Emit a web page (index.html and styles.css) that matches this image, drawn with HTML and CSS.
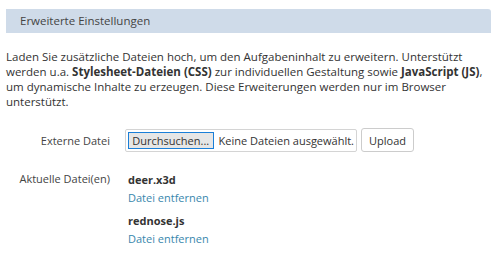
FILE: index.html
```html
<!DOCTYPE HTML>
<html>

<head>
    <meta charset="utf-8">
    <link rel="stylesheet" href="styles.css">
</head>

<body>
    <div class="panel">
        <div class="panel-head">Erweiterte Einstellungen</div>

        <p class="intro">Laden Sie zusätzliche Dateien hoch, um den Aufgabeninhalt zu erweitern. Unterstützt
            werden u.a. <strong>Stylesheet-Dateien (CSS)</strong> zur individuellen Gestaltung sowie <strong>JavaScript (JS)</strong>,
            um dynamische Inhalte zu erzeugen. Diese Erweiterungen werden nur im Browser unterstützt.</p>

        <div class="row upload-row">
            <div class="label">Externe Datei</div>
            <div class="field">
                <span class="file-input">
                    <span class="file-button">Durchsuchen...</span>
                    <span class="file-name">Keine Dateien ausgewählt.</span>
                </span>
                <button class="button">Upload</button>
            </div>
        </div>

        <div class="row files-row">
            <div class="label">Aktuelle Datei(en)</div>
            <div class="field files">
                <div class="file">
                    <strong>deer.x3d</strong>
                    <a href="#">Datei entfernen</a>
                </div>
                <div class="file">
                    <strong>rednose.js</strong>
                    <a href="#">Datei entfernen</a>
                </div>
            </div>
        </div>
    </div>
</body>

</html>
```

FILE: styles.css
```css
body {
    margin: 0;
    padding: 9px 9px 0 6px;
    font-family: "Open Sans", "Liberation Sans", sans-serif;
    font-size: 11.5px;
    color: #333;
    background: #fff;
}

.panel-head {
    height: 24px;
    line-height: 24px;
    padding-left: 14px;
    background-color: #cfdbe9;
    border-radius: 0 3px 0 0;
    color: #444;
    font-size: 11.5px;
}

.intro {
    margin: 16px 0 0;
    line-height: 15px;
}

.intro strong {
    font-weight: bold;
}

.row {
    display: flex;
    font-size: 11px;
}

.label {
    width: 104px;
    text-align: right;
    color: #444;
    flex-shrink: 0;
}

.field {
    margin-left: 15px;
    display: flex;
    align-items: center;
    gap: 4px;
}

.upload-row {
    margin-top: 19px;
    align-items: center;
}

.file-input {
    display: flex;
    align-items: center;
    width: 232px;
    height: 23px;
    padding: 0 2px;
    border: 1px solid #d4d4d4;
    border-radius: 2px;
    box-sizing: border-box;
    gap: 5px;
    color: #333;
    white-space: nowrap;
}

.file-button {
    width: 93px;
    height: 17px;
    line-height: 15px;
    text-align: center;
    border: 1px solid #1a7fd8;
    background: #e6e6e6;
    box-sizing: border-box;
}

.button {
    height: 24px;
    padding: 0 7px;
    border: 1px solid #ccc;
    border-radius: 3px;
    background: #fff;
    font-family: inherit;
    font-size: 11px;
    color: #333;
}

.files-row {
    margin-top: 19px;
}

.files {
    flex-direction: column;
    align-items: flex-start;
    gap: 0;
    margin-left: 18px;
}

.file {
    display: flex;
    flex-direction: column;
    line-height: 18px;
    margin-bottom: 5px;
}

.file strong {
    color: #333;
}

.file a {
    color: #3a87ad;
    text-decoration: none;
}
```
